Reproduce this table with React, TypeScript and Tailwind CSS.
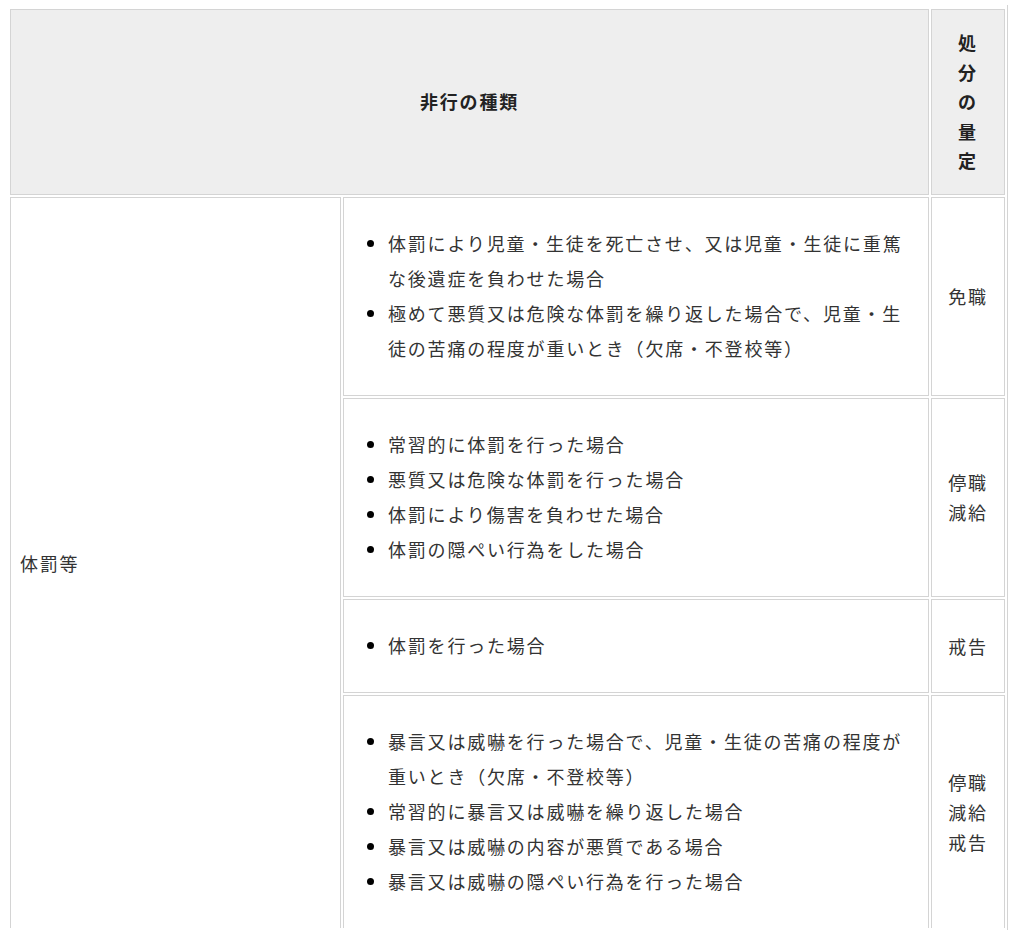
const rows = [
  {
    items: [
      '体罰により児童・生徒を死亡させ、又は児童・生徒に重篤な後遺症を負わせた場合',
      '極めて悪質又は危険な体罰を繰り返した場合で、児童・生徒の苦痛の程度が重いとき（欠席・不登校等）',
    ],
    penalty: ['免職'],
  },
  {
    items: [
      '常習的に体罰を行った場合',
      '悪質又は危険な体罰を行った場合',
      '体罰により傷害を負わせた場合',
      '体罰の隠ぺい行為をした場合',
    ],
    penalty: ['停職', '減給'],
  },
  {
    items: ['体罰を行った場合'],
    penalty: ['戒告'],
  },
  {
    items: [
      '暴言又は威嚇を行った場合で、児童・生徒の苦痛の程度が重いとき（欠席・不登校等）',
      '常習的に暴言又は威嚇を繰り返した場合',
      '暴言又は威嚇の内容が悪質である場合',
      '暴言又は威嚇の隠ぺい行為を行った場合',
    ],
    penalty: ['停職', '減給', '戒告'],
  },
];

const cell = 'border border-[#d4d4d4] align-middle';

export default function App() {
  return (
    <div
      className="min-h-[930px] bg-white pl-[8px] pt-[5px] text-[18px] tracking-[1.8px] text-[#333]"
      style={{ fontFamily: '"Noto Sans CJK JP", "Noto Sans", sans-serif' }}
    >
      <div className="w-[1000px] border-r border-[#d4d4d4] pt-[2px]">
        <table className="w-[999px] table-fixed border-separate border-spacing-[2px]">
          <colgroup>
            <col className="w-[331px]" />
            <col className="w-[586px]" />
            <col className="w-[74px]" />
          </colgroup>
          <thead>
            <tr>
              <th
                colSpan={2}
                className={`${cell} bg-[#eeeeee] py-[18px] text-center font-bold leading-[29.5px] text-[#222]`}
              >
                非行の種類
              </th>
              <th className={`${cell} bg-[#eeeeee] py-[18px] text-center font-bold leading-[29.5px] text-[#222]`}>
                <span className="mx-auto block w-[20px] break-all">処分の量定</span>
              </th>
            </tr>
          </thead>
          <tbody>
            {rows.map((row, i) => {
              const last = i === rows.length - 1;
              return (
                <tr key={i}>
                  {i === 0 ? (
                    <td
                      rowSpan={rows.length}
                      className={`${cell} border-b-0 px-[9px] leading-[30px]`}
                    >
                      体罰等
                    </td>
                  ) : null}
                  <td className={`${cell} ${last ? 'border-b-0' : ''} px-[10px] py-[10.5px]`}>
                    <ul className="my-[18px] list-disc pl-[34px] leading-[35px] marker:text-black">
                      {row.items.map((item) => (
                        <li key={item}>{item}</li>
                      ))}
                    </ul>
                  </td>
                  <td className={`${cell} ${last ? 'border-b-0' : ''} px-[8px] text-center leading-[30px]`}>
                    {row.penalty.map((p) => (
                      <div key={p}>{p}</div>
                    ))}
                  </td>
                </tr>
              );
            })}
          </tbody>
        </table>
      </div>
    </div>
  );
}
